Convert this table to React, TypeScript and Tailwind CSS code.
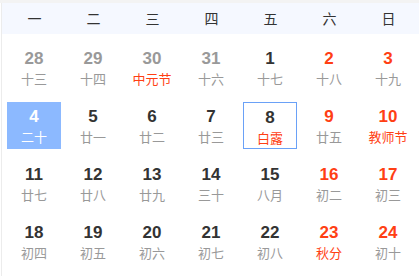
import React from "react";

type Day = { n: number; l: string; nc?: "gray" | "red" | "dark"; lr?: boolean; sel?: boolean; today?: boolean };

const rows: Day[][] = [
  [
    { n: 28, l: "十三", nc: "gray" },
    { n: 29, l: "十四", nc: "gray" },
    { n: 30, l: "中元节", nc: "gray", lr: true },
    { n: 31, l: "十六", nc: "gray" },
    { n: 1, l: "十七" },
    { n: 2, l: "十八", nc: "red" },
    { n: 3, l: "十九", nc: "red" },
  ],
  [
    { n: 4, l: "二十", sel: true },
    { n: 5, l: "廿一" },
    { n: 6, l: "廿二" },
    { n: 7, l: "廿三" },
    { n: 8, l: "白露", lr: true, today: true },
    { n: 9, l: "廿五", nc: "red" },
    { n: 10, l: "教师节", nc: "red", lr: true },
  ],
  [
    { n: 11, l: "廿七" },
    { n: 12, l: "廿八" },
    { n: 13, l: "廿九" },
    { n: 14, l: "三十" },
    { n: 15, l: "八月" },
    { n: 16, l: "初二", nc: "red" },
    { n: 17, l: "初三", nc: "red" },
  ],
  [
    { n: 18, l: "初四" },
    { n: 19, l: "初五" },
    { n: 20, l: "初六" },
    { n: 21, l: "初七" },
    { n: 22, l: "初八" },
    { n: 23, l: "秋分", nc: "red", lr: true },
    { n: 24, l: "初十", nc: "red" },
  ],
];

const weeks = ["一", "二", "三", "四", "五", "六", "日"];

function Cell({ d }: { d: Day }) {
  let numCls = "text-[#333]";
  if (d.nc === "gray") numCls = "text-[#999]";
  if (d.nc === "red") numCls = "text-[#ff3f14]";
  let lunarCls = d.lr ? "text-[#ff3f14]" : "text-[#999]";
  let box = "";
  if (d.sel) {
    box = "bg-[#8cb9ff]";
    numCls = "text-white";
    lunarCls = "text-white";
  } else if (d.today) {
    box = "border border-[#6aa1f7]";
  }
  return (
    <div className={`mx-[2px] w-[54px] h-[47px] flex flex-col items-center pt-[5px] ${box} ${d.today ? "pt-[4px]" : ""}`}>
      <div
        className={`h-[20px] leading-[20px] text-[17px] font-bold ${numCls}`}
        style={{ fontFamily: '"Liberation Sans", Arial, sans-serif' }}
      >
        {d.n}
      </div>
      <div
        className={`h-[20px] leading-[20px] text-[13px] whitespace-nowrap ${lunarCls}`}
        style={{ fontFamily: '"Noto Sans CJK SC", sans-serif' }}
      >
        {d.l}
      </div>
    </div>
  );
}

export default function App() {
  return (
    <div className="w-[419px] h-[276px] bg-white overflow-hidden">
      <div className="h-[3px] bg-[#f3f3f3]" />
      <div className="ml-[1px] border-l border-[#ececec] h-[273px]">
        <div
          className="h-[31px] bg-[#f5f8ff] grid grid-cols-[repeat(7,59px)] pl-[3px] items-center"
          style={{ fontFamily: '"Noto Sans CJK SC", sans-serif' }}
        >
          {weeks.map((w) => (
            <div key={w} className="text-center text-[14px] text-[#333] leading-[31px]">
              {w}
            </div>
          ))}
        </div>
        <div className="pl-[3px] pt-[10px] flex flex-col gap-[11px]">
          {rows.map((r, i) => (
            <div key={i} className="grid grid-cols-[repeat(7,59px)]">
              {r.map((d) => (
                <Cell key={d.n} d={d} />
              ))}
            </div>
          ))}
        </div>
      </div>
    </div>
  );
}
